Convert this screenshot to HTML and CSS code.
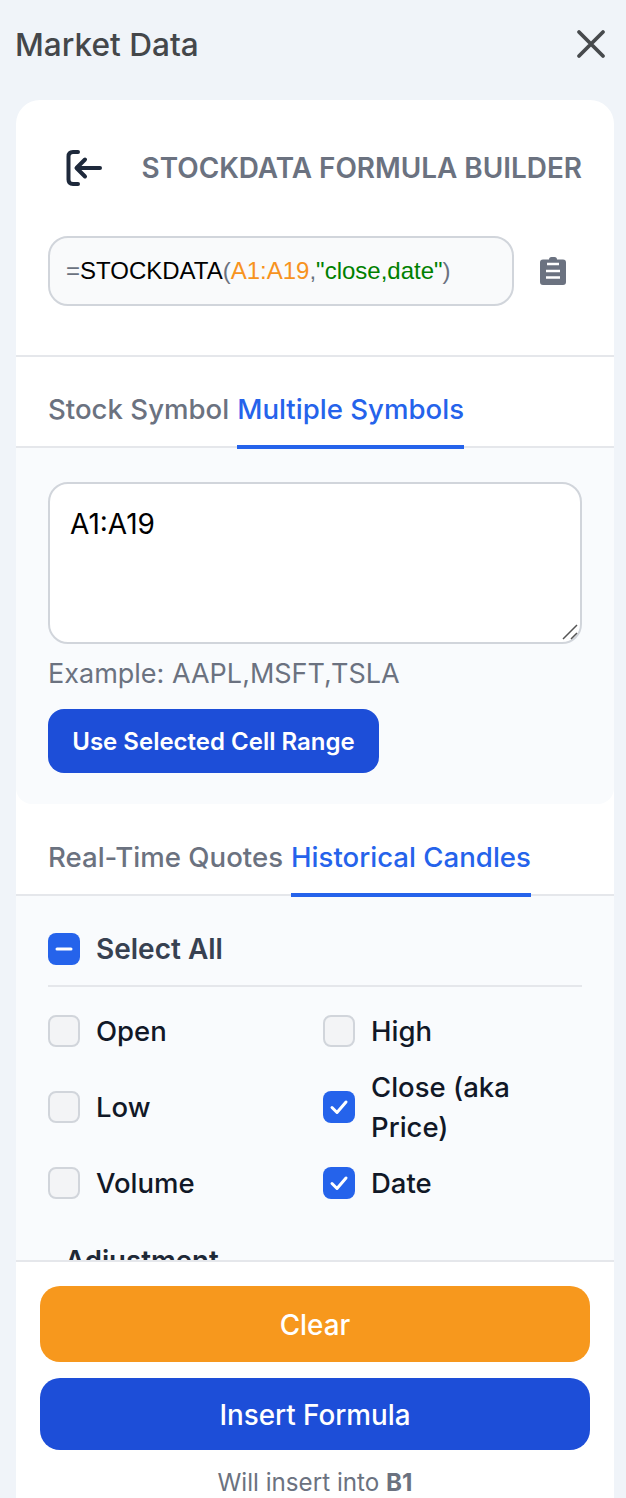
FILE: index.html
```html
<!DOCTYPE html>
<html>
    <head>
        <title>Market Data</title>
        <meta http-equiv="Content-Type" content="text/html; charset=UTF-8">
        <link rel="stylesheet" href="styles.css">
    </head>
    <body>
        <div class="top-bar">
            <h1 class="top-title">Market Data</h1>
            <svg class="close-icon" viewBox="0 0 30 30" width="30" height="30"><path d="M3 3L27 27M27 3L3 27"/></svg>
        </div>

        <div class="card">
            <div class="scroll-area">
                <div class="builder-head">
                    <svg class="back-icon" viewBox="0 0 36 36" width="36" height="36">
                        <path d="M12 2H7Q2.500 2 2.500 6.500V29.500Q2.500 34 7 34H12"/>
                        <path d="M34 18H11M19 9.500L10.500 18L19 26.500"/>
                    </svg>
                    <div class="builder-title">STOCKDATA FORMULA BUILDER</div>
                </div>

                <div class="formula-row">
                    <div class="formula-box"><span class="f-gray">=</span>STOCKDATA<span class="f-gray">(</span><span class="f-orange">A1:A19</span><span class="f-gray">,</span><span class="f-green">"close,date"</span><span class="f-gray">)</span></div>
                    <svg class="clip-icon" viewBox="0 0 26 28" width="26" height="28">
                        <path d="M9 2.500Q9 0 11.500 0H14.500Q17 0 17 2.500H23Q26 2.500 26 5.500V25Q26 28 23 28H3Q0 28 0 25V5.500Q0 2.500 3 2.500Z" fill="#6b7280"/>
                        <path d="M7 7H19M6 14H20M6 20.500H20" stroke="#fff" stroke-width="2.600"/>
                    </svg>
                </div>

                <div class="tabs first-tabs">
                    <div class="tab">Stock Symbol</div>
                    <div class="tab active">Multiple Symbols</div>
                </div>
                <div class="symbols-panel">
                    <div class="text-area">
                        A1:A19
                        <svg class="resize-grip" viewBox="0 0 16 16" width="16" height="16"><path d="M1 15L15 1M9 15L15 9"/></svg>
                    </div>
                    <div class="hint">Example: AAPL,MSFT,TSLA</div>
                    <div class="range-btn">Use Selected Cell Range</div>
                </div>

                <div class="tabs second-tabs">
                    <div class="tab">Real-Time Quotes</div>
                    <div class="tab active">Historical Candles</div>
                </div>
                <div class="fields-panel">
                    <div class="select-all">
                        <span class="check on"><svg viewBox="0 0 32 32" width="32" height="32"><path d="M9 16H23" stroke-width="3.500"/></svg></span>
                        <span class="select-all-label">Select All</span>
                    </div>
                    <div class="field-grid">
                        <div class="field"><span class="check"></span><span>Open</span></div>
                        <div class="field"><span class="check"></span><span>High</span></div>
                        <div class="field"><span class="check"></span><span>Low</span></div>
                        <div class="field"><span class="check on"><svg viewBox="0 0 32 32" width="32" height="32"><path d="M9 16.500L14 21.500L23 11"/></svg></span><span>Close (aka Price)</span></div>
                        <div class="field"><span class="check"></span><span>Volume</span></div>
                        <div class="field"><span class="check on"><svg viewBox="0 0 32 32" width="32" height="32"><path d="M9 16.500L14 21.500L23 11"/></svg></span><span>Date</span></div>
                    </div>
                    <div class="adjust-label">Adjustment</div>
                </div>
            </div>

            <div class="footer">
                <div class="big-btn clear-btn">Clear</div>
                <div class="big-btn insert-btn">Insert Formula</div>
                <div class="insert-note">Will insert into <b>B1</b></div>
            </div>
        </div>
    </body>
</html>
```

FILE: styles.css
```css
html, body {
    height: 100%;
}

body {
    margin: 0;
    display: flex;
    flex-direction: column;
    height: 1498px;
    overflow: hidden;
    background-color: #f0f4f9;
    font-family: Inter, "Liberation Sans", sans-serif;
    color: #111827;
}

.top-bar {
    height: 100px;
    flex: none;
    padding: 0 20px 12px 15px;
    box-sizing: border-box;
    display: flex;
    align-items: center;
    justify-content: space-between;
}

.top-title {
    margin: 0;
    font-size: 31.600px;
    font-weight: 500;
    color: #44474a;
}

.close-icon path {
    fill: none;
    stroke: #474a4d;
    stroke-width: 3.800;
    stroke-linecap: round;
}

.card {
    flex: 1;
    min-height: 0;
    margin: 0 12px 0 16px;
    display: flex;
    flex-direction: column;
    background-color: #fff;
    border-radius: 24px 24px 0 0;
    overflow: hidden;
}

.scroll-area {
    flex: 1;
    min-height: 0;
    overflow: hidden;
}

.builder-head {
    height: 136px;
    padding: 0 32px 0 50px;
    box-sizing: border-box;
    display: flex;
    align-items: center;
    justify-content: space-between;
}

.back-icon path {
    fill: none;
    stroke: #1e293b;
    stroke-width: 4;
    stroke-linecap: round;
    stroke-linejoin: round;
}

.builder-title {
    font-size: 27.900px;
    font-weight: 600;
    color: #6b7280;
}

.formula-row {
    height: 121px;
    padding: 0 48px 0 32px;
    box-sizing: border-box;
    display: flex;
    justify-content: space-between;
    border-bottom: 2px solid #e5e7eb;
}

.formula-box {
    width: 466px;
    height: 70px;
    box-sizing: border-box;
    padding-left: 16px;
    display: flex;
    align-items: center;
    border: 2px solid #d1d5db;
    border-radius: 20px;
    background-color: #f9fafb;
    font-family: "Liberation Sans", Arial, sans-serif;
    font-size: 24px;
    color: #000;
    white-space: pre;
}

.f-gray { color: #6b7280; }
.f-orange { color: #f7931e; }
.f-green { color: #008000; }

.clip-icon {
    margin-top: 21px;
}

.tabs {
    display: flex;
    gap: 8px;
    padding-left: 32px;
    border-bottom: 2px solid #e5e7eb;
}

.tab {
    height: 92px;
    box-sizing: border-box;
    padding-top: 16px;
    margin-bottom: -3px;
    display: flex;
    align-items: center;
    border-bottom: 4px solid transparent;
    font-size: 27.600px;
    font-weight: 500;
    color: #6b7280;
    white-space: nowrap;
}

.tab.active {
    color: #2563eb;
    border-bottom-color: #2563eb;
}

.symbols-panel {
    height: 356px;
    box-sizing: border-box;
    padding: 34px 32px 0;
    background-color: #f9fbfd;
    border-radius: 0 0 16px 16px;
}

.text-area {
    position: relative;
    height: 162px;
    box-sizing: border-box;
    padding: 22px 20px;
    border: 2px solid #d1d5db;
    border-radius: 20px;
    background-color: #fff;
    font-size: 28px;
    line-height: 36px;
    color: #000;
}

.resize-grip {
    position: absolute;
    right: 2px;
    bottom: 2px;
}

.resize-grip path {
    fill: none;
    stroke: #555;
    stroke-width: 1.500;
}

.hint {
    margin-top: 13px;
    font-size: 27px;
    line-height: 34px;
    color: #6b7280;
}

.range-btn {
    margin-top: 18px;
    width: 331px;
    height: 64px;
    display: flex;
    align-items: center;
    justify-content: center;
    border-radius: 16px;
    background-color: #1d4ed8;
    color: #fff;
    font-size: 24px;
    font-weight: 600;
}

.second-tabs .tab {
    height: 93px;
    padding-top: 17px;
}

.fields-panel {
    padding: 36px 32px 0;
    background-color: #f9fbfd;
    height: 400px;
}

.select-all {
    display: flex;
    align-items: center;
    gap: 16px;
    padding-bottom: 19px;
    border-bottom: 2px solid #e5e7eb;
}

.select-all-label {
    font-size: 28px;
    font-weight: 600;
    color: #374151;
}

.check {
    flex: none;
    width: 32px;
    height: 32px;
    box-sizing: border-box;
    border: 2px solid #d1d5db;
    border-radius: 8px;
    background-color: #f3f4f6;
}

.check.on {
    border: none;
    background-color: #2563eb;
}

.check svg {
    display: block;
}

.check path {
    fill: none;
    stroke: #fff;
    stroke-width: 3;
    stroke-linecap: round;
    stroke-linejoin: round;
}

.field-grid {
    margin-top: 24px;
    display: grid;
    grid-template-columns: 259px 259px;
    gap: 16px;
}

.field {
    display: flex;
    align-items: center;
    gap: 16px;
    font-size: 27.500px;
    font-weight: 500;
    line-height: 40px;
    color: #111827;
}

.adjust-label {
    margin: 40px 0 0 17px;
    font-size: 27.600px;
    font-weight: 600;
    color: #1f2937;
}

.footer {
    flex: none;
    height: 238px;
    box-sizing: border-box;
    padding: 24px 24px 0;
    border-top: 2px solid #e5e7eb;
    background-color: #fff;
}

.big-btn {
    box-sizing: border-box;
    padding-top: 2px;
    display: flex;
    align-items: center;
    justify-content: center;
    border-radius: 20px;
    color: #fff;
    font-size: 27.800px;
    font-weight: 500;
}

.clear-btn {
    height: 76px;
    background-color: #f7981d;
}

.insert-btn {
    height: 72px;
    margin-top: 16px;
    background-color: #1d4ed8;
}

.insert-note {
    margin-top: 17px;
    text-align: center;
    font-size: 24.200px;
    line-height: 32px;
    color: #6b7280;
}
```
